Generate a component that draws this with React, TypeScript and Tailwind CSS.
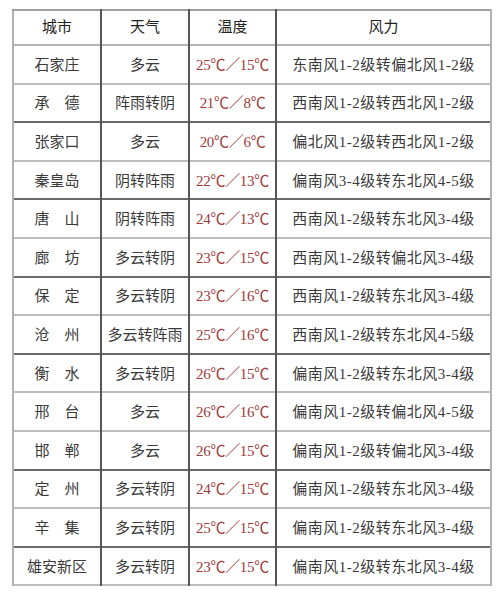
import React from "react";

type Row = { city: string; weather: string; temp: string; wind: string; dark: boolean };

const rows: Row[] = [
  { city: "石家庄", weather: "多云", temp: "25℃／15℃", wind: "东南风1-2级转偏北风1-2级", dark: false },
  { city: "承　德", weather: "阵雨转阴", temp: "21℃／8℃", wind: "西南风1-2级转西北风1-2级", dark: true },
  { city: "张家口", weather: "多云", temp: "20℃／6℃", wind: "偏北风1-2级转西北风1-2级", dark: false },
  { city: "秦皇岛", weather: "阴转阵雨", temp: "22℃／13℃", wind: "偏南风3-4级转东北风4-5级", dark: true },
  { city: "唐　山", weather: "阴转阵雨", temp: "24℃／13℃", wind: "西南风1-2级转东北风3-4级", dark: false },
  { city: "廊　坊", weather: "多云转阴", temp: "23℃／15℃", wind: "西南风1-2级转偏北风3-4级", dark: true },
  { city: "保　定", weather: "多云转阴", temp: "23℃／16℃", wind: "西南风1-2级转东北风3-4级", dark: false },
  { city: "沧　州", weather: "多云转阵雨", temp: "25℃／16℃", wind: "西南风1-2级转东北风4-5级", dark: true },
  { city: "衡　水", weather: "多云转阴", temp: "26℃／15℃", wind: "偏南风1-2级转东北风3-4级", dark: false },
  { city: "邢　台", weather: "多云", temp: "26℃／16℃", wind: "偏南风1-2级转偏北风4-5级", dark: false },
  { city: "邯　郸", weather: "多云", temp: "26℃／15℃", wind: "偏南风1-2级转偏北风3-4级", dark: true },
  { city: "定　州", weather: "多云转阴", temp: "24℃／15℃", wind: "偏南风1-2级转东北风3-4级", dark: false },
  { city: "辛　集", weather: "多云转阴", temp: "25℃／15℃", wind: "偏南风1-2级转东北风3-4级", dark: true },
  { city: "雄安新区", weather: "多云转阴", temp: "23℃／15℃", wind: "偏南风1-2级转东北风3-4级", dark: false },
];

const font = { fontFamily: '"Liberation Serif", "Noto Sans CJK SC", serif' };

export default function App() {
  return (
    <div className="w-[500px] h-[609px] bg-white pt-[9px] pl-[12px]" style={font}>
      <table className="border-collapse table-fixed w-[478px] text-[15px] leading-none">
        <colgroup>
          <col className="w-[88px]" />
          <col className="w-[88px]" />
          <col className="w-[87px]" />
          <col className="w-[215px]" />
        </colgroup>
        <thead>
          <tr className="h-[35px] border-b-2 border-b-[#b4b4b4]">
            <th className="font-normal text-[#222] border-l-2 border-l-[#b0b0b0] border-t-2 border-t-[#a0a0a0] border-r-2 border-r-[#555]">城市</th>
            <th className="font-normal text-[#222] border-t-2 border-t-[#a0a0a0] border-r-2 border-r-[#555]">天气</th>
            <th className="font-normal text-[#222] border-t-2 border-t-[#a0a0a0] border-r-2 border-r-[#555]">温度</th>
            <th className="font-normal text-[#222] border-t-2 border-t-[#a0a0a0] border-r-2 border-r-[#b0b0b0]">风力</th>
          </tr>
        </thead>
        <tbody>
          {rows.map((r, i) => (
            <tr
              key={i}
              className={
                "h-[38.6px] border-b-2 " + (r.dark ? "border-b-[#6a6a6a]" : "border-b-[#bdbdbd]")
              }
            >
              <td className="text-center text-[#3a3a3a] border-l-2 border-l-[#b0b0b0] border-r-2 border-r-[#555] pt-[2px]">{r.city}</td>
              <td className="text-center text-[#3a3a3a] border-r-2 border-r-[#555] pt-[2px]">{r.weather}</td>
              <td className="text-center text-[#9e3a3a] border-r-2 border-r-[#555] pt-[2px] whitespace-nowrap tracking-[-0.3px]">{r.temp}</td>
              <td className="text-center text-[#3a3a3a] border-r-2 border-r-[#b0b0b0] pt-[2px] whitespace-nowrap tracking-[0.5px]">{r.wind}</td>
            </tr>
          ))}
        </tbody>
      </table>
    </div>
  );
}
